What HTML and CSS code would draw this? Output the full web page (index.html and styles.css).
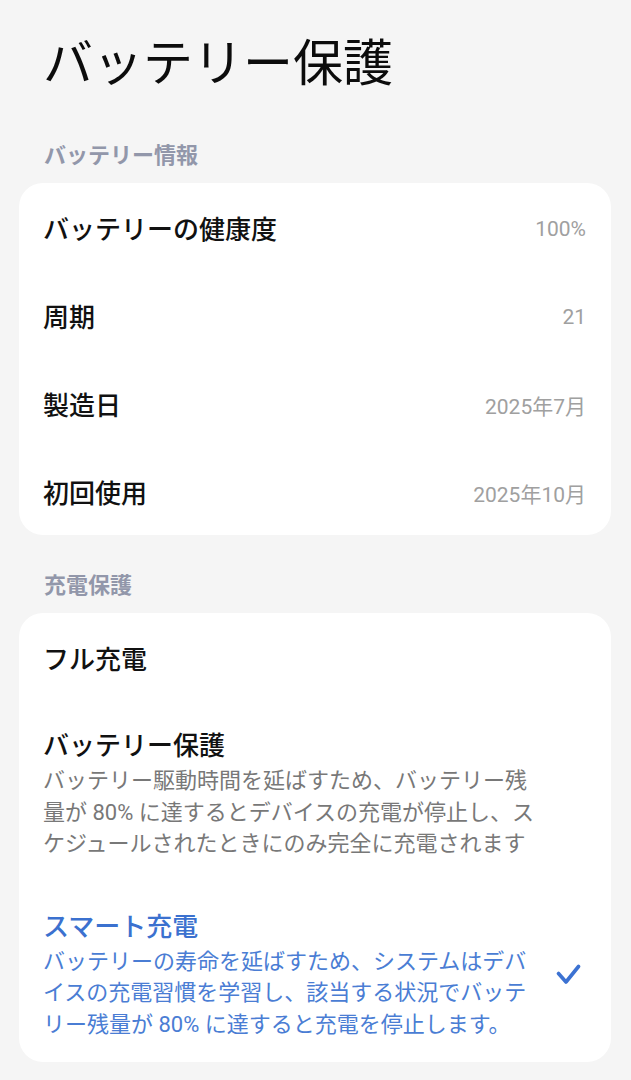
FILE: index.html
```html
<!DOCTYPE html>
<html lang="ja">
<head>
<meta charset="utf-8">
<title>バッテリー保護</title>
<link rel="stylesheet" href="styles.css">
</head>
<body>
<div class="page">
  <h1 class="title">バッテリー保護</h1>

  <div class="section-label">バッテリー情報</div>
  <div class="card">
    <div class="row"><span class="row-label">バッテリーの健康度</span><span class="row-value">100%</span></div>
    <div class="row"><span class="row-label">周期</span><span class="row-value">21</span></div>
    <div class="row"><span class="row-label">製造日</span><span class="row-value">2025年7月</span></div>
    <div class="row"><span class="row-label">初回使用</span><span class="row-value">2025年10月</span></div>
  </div>

  <div class="section-label second">充電保護</div>
  <div class="card">
    <div class="row"><span class="row-label">フル充電</span></div>
    <div class="option">
      <div class="option-text">
        <div class="option-title">バッテリー保護</div>
        <div class="option-desc">バッテリー駆動時間を延ばすため、バッテリー残量が 80% に達するとデバイスの充電が停止し、スケジュールされたときにのみ完全に充電されます</div>
      </div>
    </div>
    <div class="option selected">
      <div class="option-text">
        <div class="option-title">スマート充電</div>
        <div class="option-desc">バッテリーの寿命を延ばすため、システムはデバイスの充電習慣を学習し、該当する状況でバッテリー残量が 80% に達すると充電を停止します。</div>
      </div>
      <svg class="check" width="26" height="22" viewBox="0 0 26 22" aria-hidden="true">
        <polyline points="3.5,10.5 11,19 23.5,3.5" fill="none" stroke="#3c72d2" stroke-width="3.6" stroke-linecap="round" stroke-linejoin="round"/>
      </svg>
    </div>
  </div>
</div>
</body>
</html>
```

FILE: styles.css
```css
* { box-sizing: border-box; }

html, body {
  margin: 0;
  padding: 0;
  background: #f5f5f5;
}

body {
  font-family: Roboto, "Noto Sans CJK JP", sans-serif;
  color: #111;
}

.page {
  padding: 0 20px 22px 19px;
}

.title {
  margin: 0;
  padding: 34px 0 0 24px;
  font-size: 50px;
  line-height: 60px;
  font-weight: 400;
  color: #0c0c0c;
}

.section-label {
  margin: 47px 0 12px 0;
  padding-left: 25px;
  font-size: 22px;
  line-height: 30px;
  font-weight: 700;
  color: #9297aa;
}

.section-label.second {
  margin-top: 36px;
  margin-bottom: 12px;
}

.card {
  background: #fff;
  border-radius: 24px;
  display: flex;
  flex-direction: column;
}

.row {
  height: 88px;
  display: flex;
  align-items: center;
  justify-content: space-between;
  padding: 0 25px 0 24px;
}

.row-label {
  font-size: 26px;
  font-weight: 500;
  color: #111;
}

.row-value {
  font-family: Roboto, "Noto Sans CJK JP", sans-serif;
  font-size: 21px;
  color: #a0a0a0;
  padding-top: 4px;
}

.option {
  display: flex;
  align-items: center;
  justify-content: space-between;
  padding: 26px 30px 22px 24px;
}

.option-text {
  width: 500px;
}

.option-title {
  font-size: 26px;
  line-height: 38px;
  font-weight: 500;
  color: #111;
}

.option-desc {
  font-size: 22px;
  line-height: 31.5px;
  color: #787878;
}

.option.selected .option-title {
  color: #3b71cf;
}

.option.selected .option-desc {
  color: #4a7dd4;
}

.check {
  flex: none;
  display: block;
}
```
